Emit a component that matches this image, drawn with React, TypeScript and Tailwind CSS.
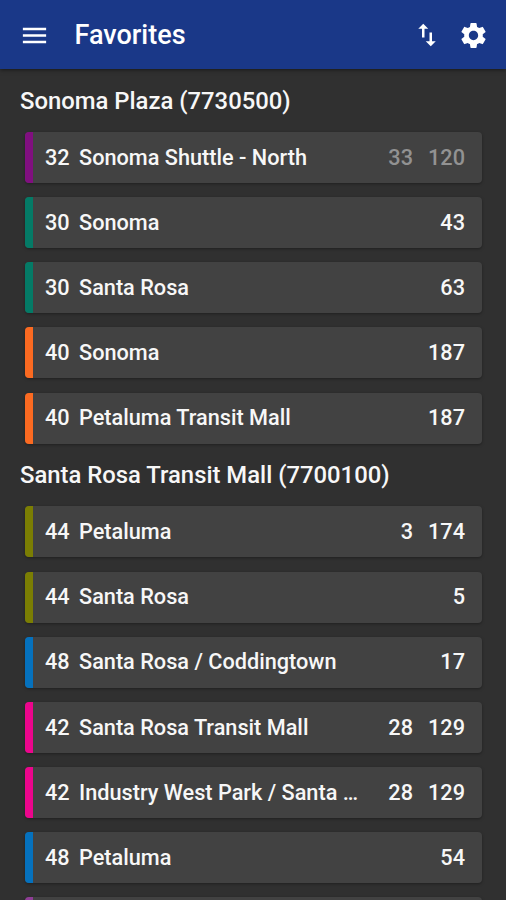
import React from 'react';
import { MdMenu, MdSettings, MdSwapVert } from 'react-icons/md';

interface Departure {
  route: string;
  name: string;
  color: string;
  times: number[];
  dimmed?: boolean;
}

interface Stop {
  title: string;
  departures: Departure[];
}

const stops: Stop[] = [
  {
    title: 'Sonoma Plaza (7730500)',
    departures: [
      { route: '32', name: 'Sonoma Shuttle - North', color: 'bg-[#800f7f]', times: [33, 120], dimmed: true },
      { route: '30', name: 'Sonoma', color: 'bg-[#047a66]', times: [43] },
      { route: '30', name: 'Santa Rosa', color: 'bg-[#047a66]', times: [63] },
      { route: '40', name: 'Sonoma', color: 'bg-[#fb6a21]', times: [187] },
      { route: '40', name: 'Petaluma Transit Mall', color: 'bg-[#fb6a21]', times: [187] },
    ],
  },
  {
    title: 'Santa Rosa Transit Mall (7700100)',
    departures: [
      { route: '44', name: 'Petaluma', color: 'bg-[#7b7e03]', times: [3, 174] },
      { route: '44', name: 'Santa Rosa', color: 'bg-[#7b7e03]', times: [5] },
      { route: '48', name: 'Santa Rosa / Coddingtown', color: 'bg-[#0571bd]', times: [17] },
      { route: '42', name: 'Santa Rosa Transit Mall', color: 'bg-[#ec058c]', times: [28, 129] },
      { route: '42', name: 'Industry West Park / Santa …', color: 'bg-[#ec058c]', times: [28, 129] },
      { route: '48', name: 'Petaluma', color: 'bg-[#0571bd]', times: [54] },
      { route: '', name: '', color: 'bg-[#8f3d96]', times: [] },
    ],
  },
];

const DepartureRow: React.FC<{ departure: Departure }> = ({ departure }) => {
  return (
    <div className="flex h-[51px] shrink-0 items-center overflow-hidden rounded bg-[#424242] pr-[17px] shadow-[0_1px_3px_rgba(0,0,0,0.35)]">
      <div className={`h-full w-2 shrink-0 ${departure.color}`} />
      <span className="ml-3 w-[34px] shrink-0 pt-px">{departure.route}</span>
      <span className="flex-1 whitespace-nowrap pt-px">{departure.name}</span>
      <div className={`flex shrink-0 gap-[15px] pt-px ${departure.dimmed ? 'text-[#929292]' : ''}`}>
        {departure.times.map((time) => (
          <span key={time}>{time}</span>
        ))}
      </div>
    </div>
  );
};

const App: React.FC = () => {
  return (
    <div className="flex h-[900px] w-full flex-col overflow-hidden bg-[#303030] font-['Roboto',sans-serif] font-medium text-[#f7f7f7]">
      <header className="z-10 flex h-[69px] shrink-0 items-center bg-[#1a3888] pt-px pl-[19px] pr-[17px] text-white shadow-[0_1px_4px_rgba(0,0,0,0.5)]">
        <MdMenu className="size-[31px]" />
        <h1 className="ml-[24.5px] flex-1 text-[27px]">Favorites</h1>
        <MdSwapVert className="mr-4 size-[30px]" />
        <MdSettings className="size-[31px]" />
      </header>

      <main className="shrink-0">
        {stops.map((stop) => (
          <section key={stop.title} className="pl-[25px] pr-6">
            <h2 className="-ml-[5px] flex h-[62.8px] items-center pt-0.5 text-[23.85px]">{stop.title}</h2>
            <div className="flex flex-col gap-[14.2px] text-[21.7px]">
              {stop.departures.map((departure, index) => (
                <DepartureRow key={index} departure={departure} />
              ))}
            </div>
          </section>
        ))}
      </main>
    </div>
  );
};

export default App;
